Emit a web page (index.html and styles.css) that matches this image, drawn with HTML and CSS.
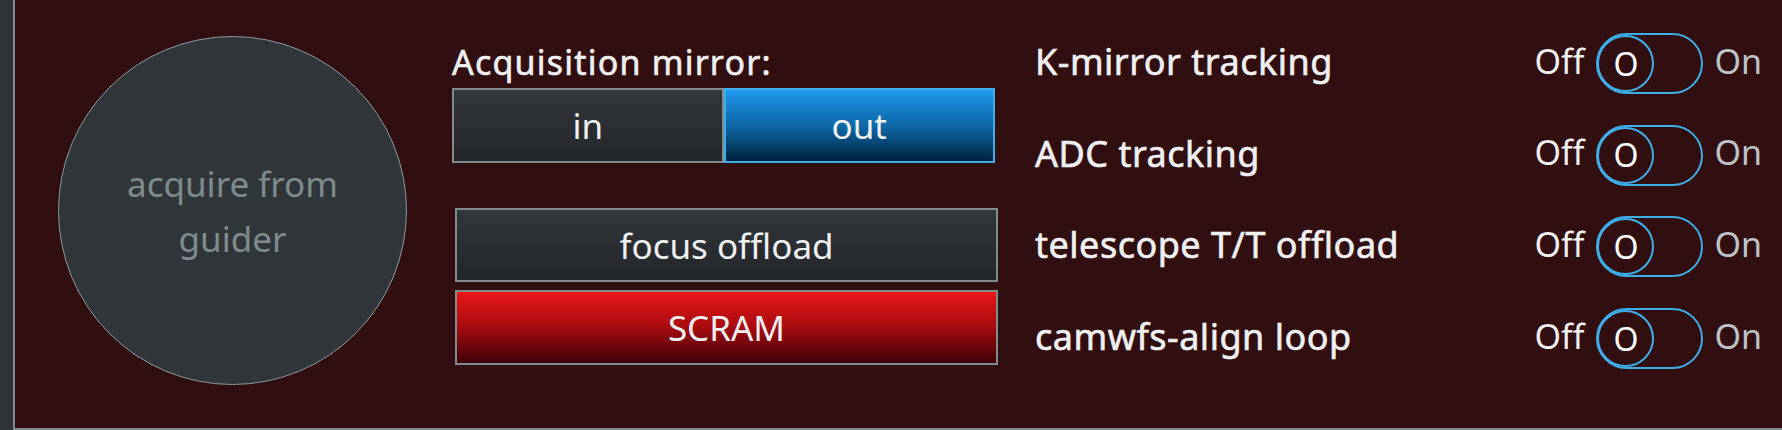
FILE: index.html
```html
<!DOCTYPE html>
<html>
<head>
<meta charset="utf-8">
<link rel="stylesheet" href="styles.css">
</head>
<body>
<div class="panel">
  <div class="circle-col">
    <button class="acquire">acquire from<br>guider</button>
  </div>
  <div class="mid">
    <div class="mid-label">Acquisition mirror:</div>
    <div class="seg">
      <button class="seg-btn">in</button>
      <button class="seg-btn active">out</button>
    </div>
    <div class="actions">
      <button class="btn">focus offload</button>
      <button class="btn scram">SCRAM</button>
    </div>
  </div>
  <div class="right">
    <div class="row">
      <span class="row-label">K-mirror tracking</span>
      <div class="toggle"><span class="off">Off</span><span class="track"><span class="knob">O</span></span><span class="on">On</span></div>
    </div>
    <div class="row">
      <span class="row-label">ADC tracking</span>
      <div class="toggle"><span class="off">Off</span><span class="track"><span class="knob">O</span></span><span class="on">On</span></div>
    </div>
    <div class="row">
      <span class="row-label">telescope T/T offload</span>
      <div class="toggle"><span class="off">Off</span><span class="track"><span class="knob">O</span></span><span class="on">On</span></div>
    </div>
    <div class="row">
      <span class="row-label">camwfs-align loop</span>
      <div class="toggle"><span class="off">Off</span><span class="track"><span class="knob">O</span></span><span class="on">On</span></div>
    </div>
  </div>
</div>
</body>
</html>
```
FILE: styles.css
```css
* { box-sizing: border-box; }
html, body {
  margin: 0;
  padding: 0;
  width: 1782px;
  height: 430px;
  overflow: hidden;
  background: #2f3439;
  font-family: "Noto Sans", "DejaVu Sans", sans-serif;
  color: #eff0f1;
}
button {
  font-family: inherit;
  color: inherit;
  margin: 0;
  padding: 0;
}
.panel {
  margin-left: 13px;
  height: 430px;
  background: #310e0f;
  border-left: 2px solid #7f8c8d;
  border-bottom: 2px solid #7f8c8d;
  display: flex;
  align-items: flex-start;
}
.circle-col {
  padding-left: 43px;
  padding-top: 36px;
}
.acquire {
  width: 349px;
  height: 349px;
  border-radius: 50%;
  border: 1.5px solid #8c9a9b;
  background: #31363b;
  color: #7f8c8d;
  font-size: 35px;
  line-height: 55px;
  display: flex;
  align-items: center;
  justify-content: center;
  text-align: center;
}
.mid {
  margin-left: 45px;
  padding-top: 40px;
  width: 546px;
  display: flex;
  flex-direction: column;
}
.mid-label {
  font-size: 34px;
  letter-spacing: 1.2px;
  -webkit-text-stroke: 0.6px #eff0f1;
  line-height: 44px;
  height: 44px;
}
.seg {
  margin-top: 4px;
  width: 543px;
  height: 75px;
  display: flex;
}
.seg-btn {
  flex: 1;
  height: 75px;
  font-size: 35px;
  border: 2px solid #7f8c8d;
  background: linear-gradient(#32373c, #232629);
}
.seg-btn.active {
  border-color: #3daee9;
  background: linear-gradient(#2099ef, #0c62a0 55%, #00213b);
}
.actions {
  margin-top: 45px;
  margin-left: 3px;
  width: 543px;
  display: flex;
  flex-direction: column;
  gap: 8px;
}
.btn {
  height: 74px;
  font-size: 35px;
  border: 2px solid #7f8c8d;
  background: linear-gradient(#32373c, #232629);
}
.btn.scram {
  height: 75px;
  background: linear-gradient(#ea1616, #a70c10 50%, #3c0006);
}
.right {
  flex: 1;
  margin-left: 37px;
  padding-top: 18px;
  padding-right: 20px;
  display: flex;
  flex-direction: column;
}
.row {
  height: 91.6px;
  display: flex;
  align-items: center;
  justify-content: space-between;
}
.row-label {
  font-size: 36px;
  letter-spacing: 0.5px;
  -webkit-text-stroke: 0.6px #eff0f1;
  margin-bottom: 4px;
}
.toggle {
  display: flex;
  align-items: center;
}
.off, .on {
  font-size: 34px;
  margin-bottom: 6px;
}
.on { color: #bdc3c7; }
.track {
  margin: 0 11px 0 12px;
  width: 107px;
  height: 61px;
  border: 2px solid #3daee9;
  border-radius: 31px;
  position: relative;
}
.knob {
  position: absolute;
  left: -1px;
  top: 0px;
  width: 57px;
  height: 57px;
  border: 2px solid #3daee9;
  border-radius: 50%;
  font-size: 32px;
  color: #ffffff;
  display: flex;
  align-items: center;
  justify-content: center;
  line-height: 1;
}
```
